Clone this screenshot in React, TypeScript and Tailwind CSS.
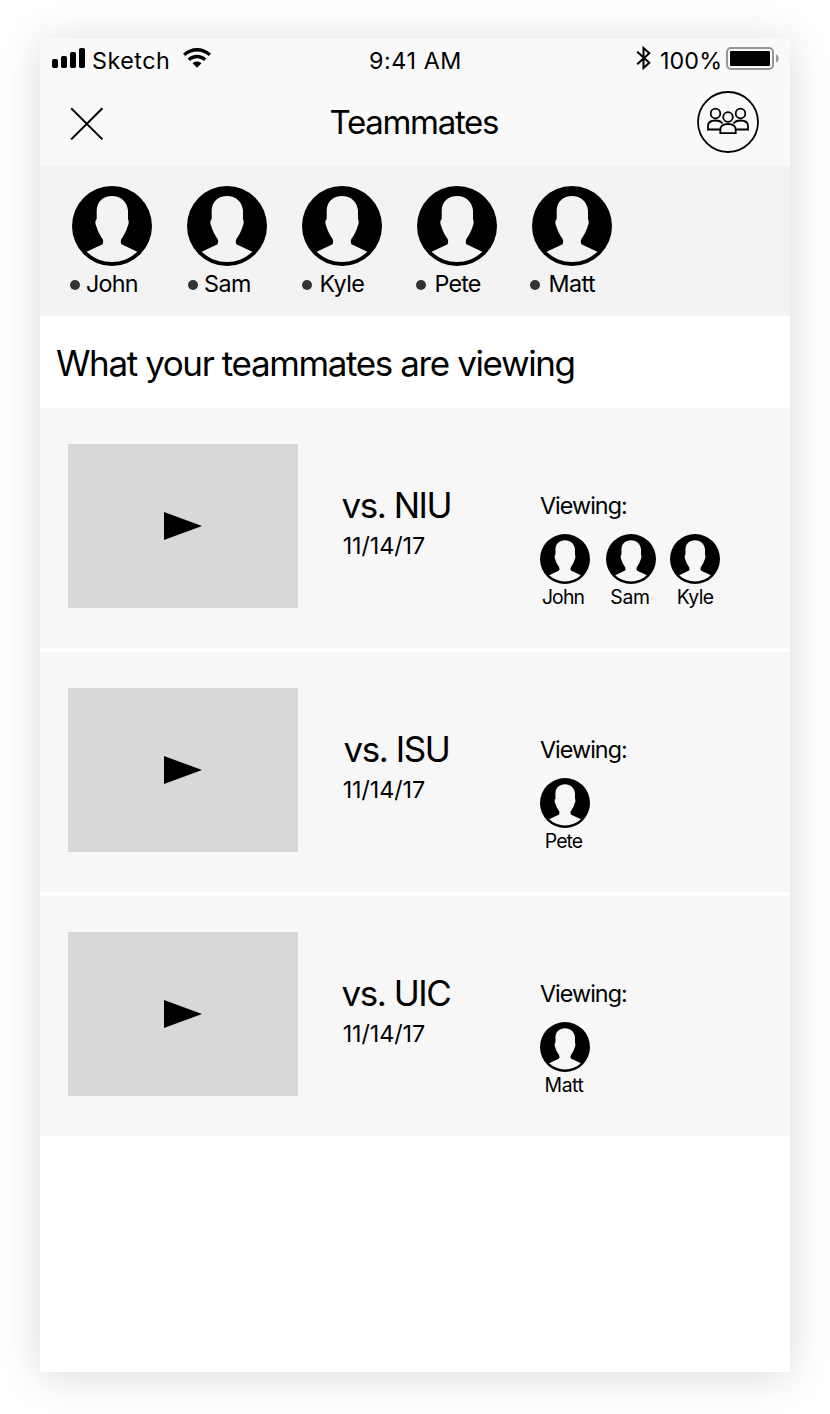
import React from "react";

function Avatar({ className }: { className: string }) {
  return (
    <svg viewBox="0 0 80 80" className={className} aria-hidden="true">
      <path
        fillRule="evenodd"
        d="M40 0A40 40 0 1 1 40 80A40 40 0 1 1 40 0ZM40 10C31 10 25 15.500 24.700 24.500V33.300C23 34.500 23 37.500 24.200 40C25.800 45.500 28.500 50 30.600 53C31.600 55 31 56.800 30.600 58.300L14.700 65.800A36.400 36.400 0 0 0 65.300 65.800L49.400 58.300C48.800 56.800 48.400 55 49.400 53C51.500 50 54.200 45.500 55.800 40C57 37.500 57 34.500 56 33.300V24.500C55 15.500 49 10 40 10Z"
      />
    </svg>
  );
}

function StatusBar() {
  return (
    <div className="flex h-[46px] pl-3 pr-[11px] text-[23.3px] leading-[45px]">
      <div className="flex w-[317px]">
        <svg viewBox="0 0 34 20" className="mt-[10px] h-5 w-[34px]">
          <rect x="0" y="11" width="6" height="9" rx="1.7" />
          <rect x="9" y="8" width="6" height="12" rx="1.7" />
          <rect x="18" y="4" width="6" height="16" rx="1.7" />
          <rect x="27" y="0" width="6" height="20" rx="1.7" />
        </svg>
        <span className="ml-[6px] w-[79px] tracking-[0.5px]">Sketch</span>
        <svg viewBox="0 0 28 20" className="ml-[12px] mt-[10px] h-5 w-7">
          <path d="M0 5.700C8 -1.900 20 -1.900 28 5.700L25.700 8.100C19.200 2 8.800 2 2.300 8.100Z" />
          <path d="M4.700 10.500C10 5.500 18 5.500 23.300 10.500L20.900 12.900C17 9.200 11 9.200 7.100 12.900Z" />
          <path d="M9.500 15.200C12 13 16 13 18.500 15.200L14 19.700Z" />
        </svg>
      </div>
      <span className="w-[266px] whitespace-nowrap tracking-[0.58px]">9:41 AM</span>
      <svg viewBox="0 0 16 24" className="ml-[1px] mt-2 h-6 w-4 fill-none stroke-black stroke-2">
        <path d="M1.200 5.800L13.300 16.800L7.500 22V2L13.300 7.200L1.200 18.200" />
      </svg>
      <span className="ml-2 w-[66px] tracking-[0.1px]">100%</span>
      <svg viewBox="0 0 53 24" className="mt-[9px] h-6 w-[53px]">
        <rect x="1" y="1" width="46" height="21" rx="4" className="fill-none stroke-[#979797] stroke-2" />
        <rect x="4" y="4" width="40" height="15" rx="1" />
        <path d="M50 7.500C53.600 8.500 53.600 14.500 50 15.500Z" className="fill-[#979797]" />
      </svg>
    </div>
  );
}

function GroupIcon() {
  return (
    <svg viewBox="0 0 62 62" className="mt-[7px] h-[62px] w-[62px] fill-none stroke-black stroke-[1.8]">
      <circle cx="31" cy="31" r="30" />
      <circle cx="18.500" cy="22.500" r="4.800" />
      <circle cx="43.500" cy="22.500" r="4.800" />
      <circle cx="31" cy="26" r="4.800" />
      <path d="M23 38.500H11V35C11 31.500 14 29.500 18.500 29.500C21.500 29.500 24 30.300 25.500 32.500" />
      <path d="M39 38.500H51V35C51 31.500 48 29.500 43.500 29.500C40.500 29.500 38 30.300 36.500 32.500" />
      <path d="M23.300 42.100V39C23.300 35 26 33 31 33C36 33 38.700 35 38.700 39V42.100Z" />
    </svg>
  );
}

const teammates = [
  { name: "John", label: "-ml-[2px] gap-[6px] tracking-[-0.8px]" },
  { name: "Sam", label: "ml-[1px] gap-[6px] tracking-[-0.5px]" },
  { name: "Kyle", label: "gap-[7.5px] tracking-[-0.65px]" },
  { name: "Pete", label: "-ml-[1px] gap-[8.5px] tracking-[-0.8px]" },
  { name: "Matt", label: "-ml-[2px] gap-[8.5px] tracking-[-0.56px]" },
];

const games = [
  {
    title: "vs. NIU",
    titleClass: "-ml-[0.5px] tracking-[-1.47px]",
    viewers: [
      { name: "John", box: "w-[66px]", label: "-ml-[2px] tracking-[-0.85px]" },
      { name: "Sam", box: "w-[64px]", label: "-ml-[1px] tracking-[-0.35px]" },
      { name: "Kyle", box: "w-[50px]", label: "tracking-[-0.65px]" },
    ],
  },
  {
    title: "vs. ISU",
    titleClass: "pl-[1.5px] tracking-[-1.45px]",
    viewers: [{ name: "Pete", box: "w-[66px]", label: "-ml-[1.5px] tracking-[-0.9px]" }],
  },
  {
    title: "vs. UIC",
    titleClass: "-ml-[0.5px] tracking-[-1.47px]",
    viewers: [{ name: "Matt", box: "w-[66px]", label: "-ml-[1px] tracking-[-0.43px]" }],
  },
];

export default function App() {
  return (
    <div className="h-[1414px] w-[830px] bg-white px-10 pt-[38px] font-['Inter',sans-serif] text-black">
      <main className="flex h-[1334px] w-[750px] flex-col bg-white shadow-[0_4px_40px_rgba(0,0,0,0.15)]">
        <header className="h-32 bg-[#f9f9f9]">
          <StatusBar />
          <div className="flex h-[82px] pl-[30px] pr-[31px]">
            <svg viewBox="0 0 34 34" className="mt-[23px] h-[34px] w-[34px] stroke-black stroke-2">
              <path d="M1.200 1.200L32.400 32.400M32.400 1.200L1.200 32.400" />
            </svg>
            <h1 className="ml-[225.5px] w-[367.5px] text-[33px] leading-[76px] tracking-[-1.29px]">Teammates</h1>
            <GroupIcon />
          </div>
        </header>

        <section className="flex h-[150px] gap-[35px] bg-[#f3f3f3] pl-8 pt-5">
          {teammates.map((mate) => (
            <div key={mate.name} className="w-20">
              <Avatar className="block h-20 w-20" />
              <div className={`flex text-[23.3px] leading-[35px] ${mate.label}`}>
                <span className="mt-[14px] size-[10px] shrink-0 rounded-full bg-[#333]" />
                <span>{mate.name}</span>
              </div>
            </div>
          ))}
        </section>

        <h2 className="h-[92px] whitespace-nowrap pl-4 text-[35px] leading-[94px] tracking-[-1.395px]">
          What your teammates are viewing
        </h2>

        <section className="flex flex-col gap-1">
          {games.map((game) => (
            <article key={game.title} className="flex h-60 bg-[#f7f7f7] pl-7 pt-9">
              <div className="flex h-[164px] w-[230px] items-center justify-center bg-[#d8d8d8]">
                <svg viewBox="0 0 38 28" className="h-7 w-[38px]">
                  <path d="M0 0L38 14L0 28Z" />
                </svg>
              </div>
              <div className="ml-11 w-[198px] pt-10">
                <h3 className={`text-[35px] leading-[42px] ${game.titleClass}`}>{game.title}</h3>
                <p className="pl-[0.7px] text-[23.3px] leading-[39px] tracking-[-0.07px]">11/14/17</p>
              </div>
              <div className="pt-[46px]">
                <p className="text-[23.3px] leading-[31px] tracking-[-0.95px]">Viewing:</p>
                <div className="flex pt-[13px]">
                  {game.viewers.map((viewer) => (
                    <div key={viewer.name} className={viewer.box}>
                      <Avatar className="block size-[50px]" />
                      <p className={`w-[50px] text-center text-[19.4px] leading-[26px] ${viewer.label}`}>{viewer.name}</p>
                    </div>
                  ))}
                </div>
              </div>
            </article>
          ))}
        </section>
      </main>
    </div>
  );
}
